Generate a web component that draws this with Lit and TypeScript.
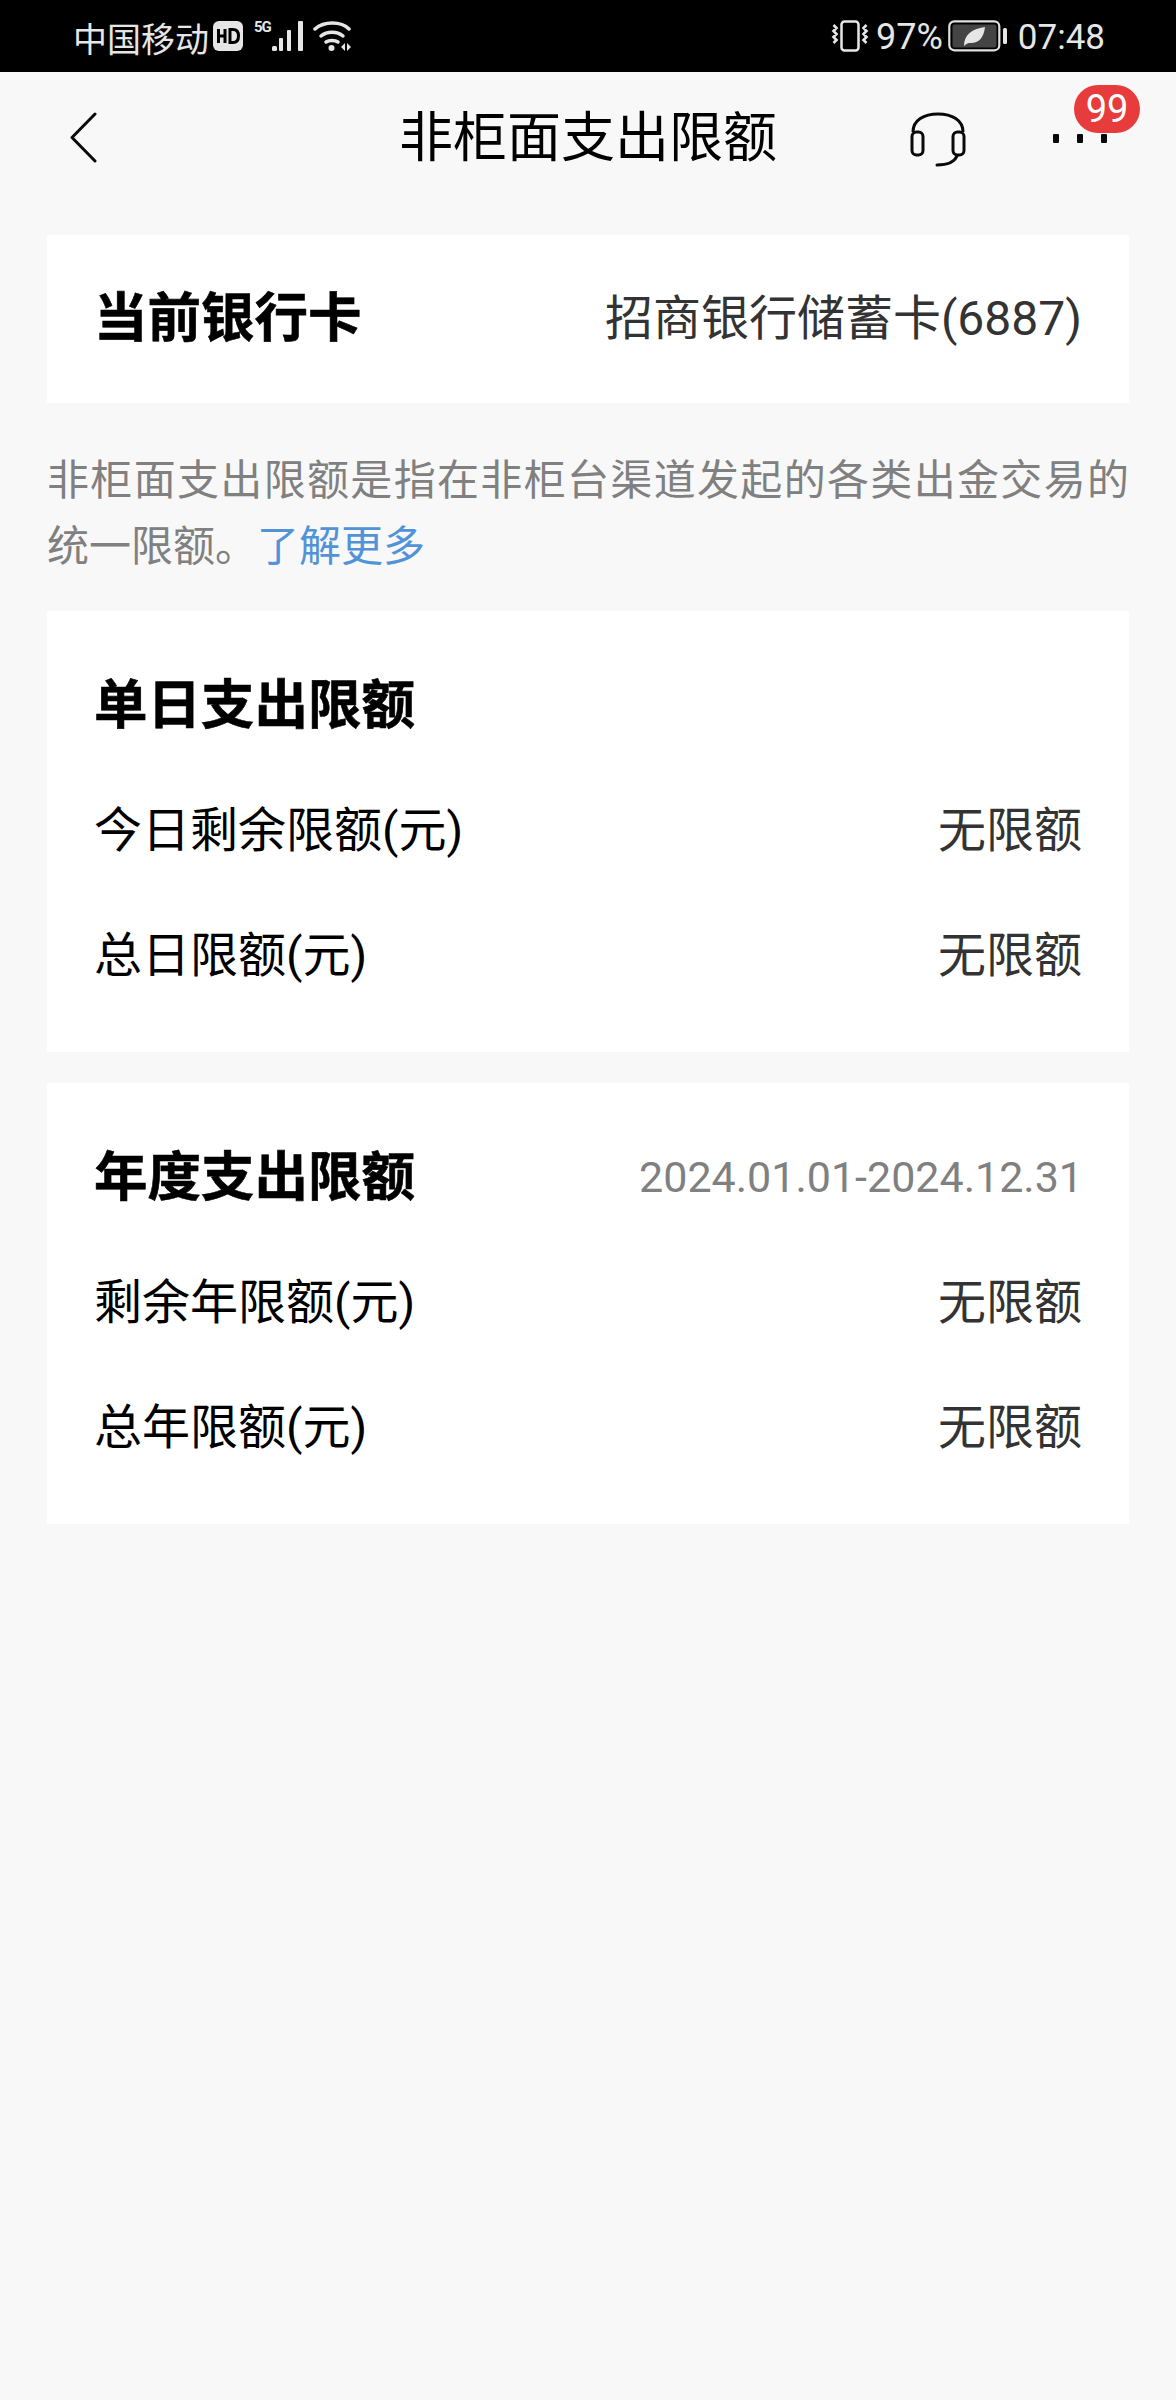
import { LitElement, html, css } from "lit";
import { customElement } from "lit/decorators.js";

const hd = html`<svg class="i" width="30" height="30" viewBox="0 0 30 30"><rect width="30" height="30" rx="6" fill="#e6e6e6"/><path d="M5.500 8v14M5.500 15h6.500M12 8v14" stroke="#000" stroke-width="3" fill="none"/><path d="M17 8.500v13h3c3.600 0 5.500-2.600 5.500-6.500s-1.900-6.500-5.500-6.500z" stroke="#000" stroke-width="3" fill="none"/></svg>`;
const signal = html`<svg class="i" width="33" height="32" viewBox="0 0 33 32"><g fill="#e6e6e6"><rect x="1" y="26" width="5" height="5" rx="1.500"/><rect x="8" y="18" width="4" height="13" rx="1"/><rect x="16" y="10" width="4" height="21" rx="1"/><rect x="27" y="1" width="5" height="30" rx="1"/></g></svg>`;
const wifi = html`<svg class="i" width="40" height="32" viewBox="0 0 40 32"><g fill="none" stroke="#e6e6e6" stroke-width="3.500" stroke-linecap="round"><path d="M2 9C11 1 28 1 36 9"/><path d="M8 16c6-5 16-5 22 0"/><path d="M13 22c3-2 9-2 12 0"/></g><circle cx="18.500" cy="28" r="3" fill="#e6e6e6"/><path d="M28 27l4-4v8zM34 23l4 4-4 4z" fill="#e6e6e6"/></svg>`;
const vibrate = html`<svg class="i" width="38" height="32" viewBox="0 0 38 32"><rect x="10.500" y="1.500" width="17" height="29" rx="3" fill="none" stroke="#e6e6e6" stroke-width="2.500"/><path d="M2.500 5l3 3-3 3 3 3-3 3 3 3-3 3M35.500 5l-3 3 3 3-3 3 3 3-3 3 3 3" fill="none" stroke="#e6e6e6" stroke-width="2.600"/></svg>`;
const battery = html`<svg class="i" width="59" height="32" viewBox="0 0 59 32"><rect x="1.300" y="1.300" width="50" height="29" rx="5" fill="none" stroke="#e0e0e0" stroke-width="2.200"/><rect x="4.500" y="4.500" width="44" height="23" rx="2" fill="#444"/><path d="M16 26c0-11 7-17 21-19-1 11-7 17-16 16-1 0-3 1-5 3z" fill="#e6e6e6"/><rect x="55" y="8" width="4" height="16" rx="1.500" fill="#e6e6e6"/></svg>`;
const back = html`<svg class="back" width="28" height="52" viewBox="0 0 28 52"><path d="M25 2L2 25.500 25 49" fill="none" stroke="#0a0a0a" stroke-width="3" stroke-linecap="round" stroke-linejoin="round"/></svg>`;
const headset = html`<svg class="head" width="56" height="56" viewBox="0 0 56 56"><g fill="none" stroke="#0a0a0a" stroke-width="3"><path d="M3 20C3 8 14 2 28 2s25 6 25 18"/><rect x="2" y="20" width="11" height="23" rx="4.500"/><rect x="43" y="20" width="11" height="23" rx="4.500"/><path d="M47 44c-3 7-11 9-20 9" stroke-linecap="round"/></g></svg>`;

@customElement("app-root")
export class AppRoot extends LitElement {
  static styles = css`
    :host {
      display: block;
      min-height: 2400px;
      background: #f8f8f8;
      font-family: Roboto, "Noto Sans CJK SC", sans-serif;
      color: #000;
    }
    .status {
      height: 72px;
      background: #000;
      color: #e6e6e6;
      display: flex;
      align-items: center;
      justify-content: space-between;
      padding: 0 71px 0 73px;
      font-size: 34px;
    }
    .group { display: flex; align-items: center; }
    .i { display: block; flex: none; }
    .carrier { margin: 2px 4px 0 0; }
    .fiveg { font-size: 15px; font-weight: 700; letter-spacing: -1px; line-height: 16px; margin: -18px 0 0 11px; width: 17px; }
    .wifi-gap { margin-left: 9px; }
    .pct { font-size: 36px; margin: 2px 5px 0 7px; }
    .time { font-size: 35px; margin: 2px 0 0 11px; }
    .nav {
      height: 128px;
      display: grid;
      grid-template-columns: 1fr auto 1fr;
      align-items: center;
    }
    .nav-left { padding-left: 70px; display: flex; margin-top: 3px; }
    .title { font-size: 54px; line-height: 1; font-weight: 400; margin-top: 5px; }
    .nav-right { display: flex; justify-content: flex-end; align-items: center; padding-right: 69px; }
    .head { margin-right: 87px; margin-top: 8px; }
    .more { position: relative; display: flex; gap: 18px; margin-top: 4px; }
    .dot { width: 6px; height: 9px; border-radius: 1px; background: #0a0a0a; }
    .badge {
      position: absolute;
      left: 21px;
      top: -49px;
      width: 66px;
      height: 48px;
      border-radius: 24px;
      background: #e83b3b;
      color: #fff;
      font-size: 38px;
      line-height: 48px;
      text-align: center;
    }
    .card { background: #fff; margin: 0 47px; padding: 0 47px; }
    .current {
      margin-top: 35px;
      height: 168px;
      display: flex;
      align-items: center;
      justify-content: space-between;
    }
    .strong { font-size: 53.500px; font-weight: 700; line-height: 60px; -webkit-text-stroke: 0.6px #000; }
    .value { font-size: 48px; line-height: 60px; color: #333; }
    .note {
      margin: 45px 47px 31px;
      font-size: 42px;
      line-height: 66px;
      color: #808080;
      text-align: justify;
    }
    .note a { color: #5293d8; }
    .limits { padding-bottom: 66px; }
    .limits + .limits { margin-top: 31px; }
    .head-row {
      height: 190px;
      display: flex;
      align-items: center;
      justify-content: space-between;
    }
    .range { font-size: 43px; color: #808080; margin: -2px -1px 0 0; }
    .row { display: flex; justify-content: space-between; height: 60px; align-items: center; }
    .row + .row { margin-top: 65px; }
    .label { font-size: 48px; line-height: 60px; }
  `;

  private section(title: string, rows: string[], range = "") {
    return html`<section class="card limits">
      <div class="head-row"><span class="strong">${title}</span>${range ? html`<span class="range">${range}</span>` : ""}</div>
      ${rows.map((r) => html`<div class="row"><span class="label">${r}</span><span class="value">无限额</span></div>`)}
    </section>`;
  }

  render() {
    return html`
      <div class="status">
        <div class="group">
          <span class="carrier">中国移动</span>${hd}
          <span class="fiveg">5G</span>${signal}
          <span class="wifi-gap">${wifi}</span>
        </div>
        <div class="group">
          ${vibrate}<span class="pct">97%</span>${battery}<span class="time">07:48</span>
        </div>
      </div>
      <header class="nav">
        <div class="nav-left">${back}</div>
        <div class="title">非柜面支出限额</div>
        <div class="nav-right">
          ${headset}
          <div class="more">
            <span class="dot"></span><span class="dot"></span><span class="dot"></span>
            <span class="badge">99</span>
          </div>
        </div>
      </header>
      <section class="card current">
        <span class="strong">当前银行卡</span>
        <span class="value">招商银行储蓄卡(6887)</span>
      </section>
      <p class="note">非柜面支出限额是指在非柜台渠道发起的各类出金交易的统一限额。<a>了解更多</a></p>
      ${this.section("单日支出限额", ["今日剩余限额(元)", "总日限额(元)"])}
      ${this.section("年度支出限额", ["剩余年限额(元)", "总年限额(元)"], "2024.01.01-2024.12.31")}
    `;
  }
}
